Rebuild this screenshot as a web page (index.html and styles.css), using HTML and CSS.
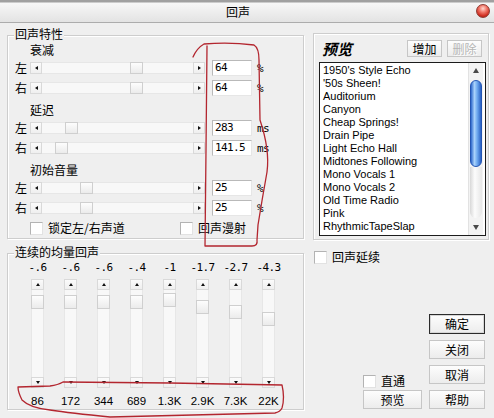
FILE: index.html
```html
<!DOCTYPE html>
<html lang="zh-CN">
<head>
<meta charset="utf-8">
<title>回声</title>
<link rel="stylesheet" href="styles.css">
</head>
<body>
<div class="window">
  <div class="titlebar">
    <div class="title">回声</div>
    <div class="close"></div>
  </div>
  <div class="main">
    <div class="leftcol">
      <div class="group props">
        <span class="legend">回声特性</span>
        <div class="section">
          <div class="sechead">衰减</div>
          <div class="row">
            <span class="rlabel">左</span>
            <div class="hslider"><span class="harrow left"></span><span class="htrack"><span class="hthumb" style="left:88px"></span></span><span class="harrow right"></span></div>
            <span class="field">64</span><span class="unit">%</span>
          </div>
          <div class="row">
            <span class="rlabel">右</span>
            <div class="hslider"><span class="harrow left"></span><span class="htrack"><span class="hthumb" style="left:88px"></span></span><span class="harrow right"></span></div>
            <span class="field">64</span><span class="unit">%</span>
          </div>
        </div>
        <div class="section">
          <div class="sechead">延迟</div>
          <div class="row">
            <span class="rlabel">左</span>
            <div class="hslider"><span class="harrow left"></span><span class="htrack"><span class="hthumb" style="left:23px"></span></span><span class="harrow right"></span></div>
            <span class="field">283</span><span class="unit">ms</span>
          </div>
          <div class="row">
            <span class="rlabel">右</span>
            <div class="hslider"><span class="harrow left"></span><span class="htrack"><span class="hthumb" style="left:13px"></span></span><span class="harrow right"></span></div>
            <span class="field">141.5</span><span class="unit">ms</span>
          </div>
        </div>
        <div class="section">
          <div class="sechead">初始音量</div>
          <div class="row">
            <span class="rlabel">左</span>
            <div class="hslider"><span class="harrow left"></span><span class="htrack"><span class="hthumb" style="left:38px"></span></span><span class="harrow right"></span></div>
            <span class="field">25</span><span class="unit">%</span>
          </div>
          <div class="row">
            <span class="rlabel">右</span>
            <div class="hslider"><span class="harrow left"></span><span class="htrack"><span class="hthumb" style="left:38px"></span></span><span class="harrow right"></span></div>
            <span class="field">25</span><span class="unit">%</span>
          </div>
        </div>
        <div class="checks">
          <label class="check wide"><span class="box"></span><span>锁定左/右声道</span></label>
          <label class="check"><span class="box"></span><span>回声漫射</span></label>
        </div>
      </div>

      <div class="group eq">
        <span class="legend">连续的均量回声</span>
        <div class="eqcols">
          <div class="eqcol"><span class="eqval">-.6</span><div class="vscroll"><span class="varrow up"></span><span class="vtrack"><span class="vthumb" style="top:5px"></span></span><span class="varrow down"></span></div><span class="eqfreq">86</span></div>
          <div class="eqcol"><span class="eqval">-.6</span><div class="vscroll"><span class="varrow up"></span><span class="vtrack"><span class="vthumb" style="top:5px"></span></span><span class="varrow down"></span></div><span class="eqfreq">172</span></div>
          <div class="eqcol"><span class="eqval">-.6</span><div class="vscroll"><span class="varrow up"></span><span class="vtrack"><span class="vthumb" style="top:5px"></span></span><span class="varrow down"></span></div><span class="eqfreq">344</span></div>
          <div class="eqcol"><span class="eqval">-.4</span><div class="vscroll"><span class="varrow up"></span><span class="vtrack"><span class="vthumb" style="top:5px"></span></span><span class="varrow down"></span></div><span class="eqfreq">689</span></div>
          <div class="eqcol"><span class="eqval">-1</span><div class="vscroll"><span class="varrow up"></span><span class="vtrack"><span class="vthumb" style="top:3px"></span></span><span class="varrow down"></span></div><span class="eqfreq">1.3K</span></div>
          <div class="eqcol"><span class="eqval">-1.7</span><div class="vscroll"><span class="varrow up"></span><span class="vtrack"><span class="vthumb" style="top:10px"></span></span><span class="varrow down"></span></div><span class="eqfreq">2.9K</span></div>
          <div class="eqcol"><span class="eqval">-2.7</span><div class="vscroll"><span class="varrow up"></span><span class="vtrack"><span class="vthumb" style="top:15px"></span></span><span class="varrow down"></span></div><span class="eqfreq">7.3K</span></div>
          <div class="eqcol"><span class="eqval">-4.3</span><div class="vscroll"><span class="varrow up"></span><span class="vtrack"><span class="vthumb" style="top:22px"></span></span><span class="varrow down"></span></div><span class="eqfreq">22K</span></div>
        </div>
      </div>
    </div>

    <div class="rightcol">
      <div class="group preset">
        <div class="phead">
          <span class="ptitle">预览</span>
          <span class="btn small">增加</span>
          <span class="btn small disabled">删除</span>
        </div>
        <div class="list">
          <ul class="items">
            <li>1950's Style Echo</li>
            <li>'50s Sheen!</li>
            <li>Auditorium</li>
            <li>Canyon</li>
            <li>Cheap Springs!</li>
            <li>Drain Pipe</li>
            <li>Light Echo Hall</li>
            <li>Midtones Following</li>
            <li>Mono Vocals 1</li>
            <li>Mono Vocals 2</li>
            <li>Old Time Radio</li>
            <li>Pink</li>
            <li>RhythmicTapeSlap</li>
          </ul>
          <div class="lscroll">
            <span class="larrow up"></span>
            <span class="lthumb"></span>
            <span class="lrest"></span>
            <span class="larrow down"></span>
          </div>
        </div>
      </div>
      <label class="check sustain"><span class="box"></span><span>回声延续</span></label>

      <div class="actions">
        <div class="actions-left">
          <label class="check"><span class="box"></span><span>直通</span></label>
          <span class="btn">预览</span>
        </div>
        <div class="actions-right">
          <span class="btn default">确定</span>
          <span class="btn">关闭</span>
          <span class="btn">取消</span>
          <span class="btn">帮助</span>
        </div>
      </div>
    </div>
  </div>
</div>

<svg class="marks" width="494" height="418" viewBox="0 0 494 418" aria-hidden="true">
  <path d="M193,57 Q197,48 204,44 Q230,42 254,45 Q259,48 259,60 L260,120 Q270,150 267,172 Q262,200 258,225 L257,240 Q258,246 252,246 L205,246 L206,150 L207,46"/>
  <path d="M18,387 L50,386 Q58,385 63,382 L170,383 L282,385 Q285,398 282,408 Q280,412 275,413 L110,417 Q70,413 50,410 Q30,408 22,400 Q18,392 18,387"/>
</svg>
</body>
</html>
```

FILE: styles.css
```css
* { box-sizing: border-box; }
html, body { margin: 0; padding: 0; }
body {
  width: 494px;
  height: 418px;
  overflow: hidden;
  position: relative;
  background: #efefef;
  color: #000;
  font-family: "Noto Sans CJK SC", "Liberation Sans", sans-serif;
  font-size: 12px;
}
.window { display: flex; flex-direction: column; height: 418px; }

/* title bar */
.titlebar {
  height: 23px;
  display: flex;
  align-items: center;
  padding-right: 4px;
  background: linear-gradient(#a0a0a0 0, #a0a0a0 2px, #f7f7f7 3px, #e3e3e3 100%);
  border-bottom: 1px solid #acacac;
}
.title { flex: 1; text-align: center; line-height: 16px; padding-top: 1px; }
.close {
  width: 14px;
  height: 14px;
  border-radius: 50%;
  border: 1px solid #8e3a32;
  background: radial-gradient(circle at 50% 30%, #ffd8d0 0, #f27a6c 35%, #cf2f22 70%, #951a12 100%);
}

/* main layout */
.main { flex: 1; display: flex; padding: 10px 0 0 7px; }
.leftcol { width: 297px; padding-top: 2px; display: flex; flex-direction: column; }
.rightcol { width: 176px; margin-left: 9px; display: flex; flex-direction: column; padding-bottom: 9px; }

/* group boxes */
.group {
  position: relative;
  border: 1px solid #cdcdcd;
  box-shadow: inset 1px 1px 0 #fff, 1px 1px 0 #fff;
}
.legend {
  position: absolute;
  left: 6px;
  top: -10px;
  padding: 0 1px;
  background: #efefef;
  line-height: 16px;
}

/* properties group */
.props { padding: 6px 0 0 7px; }
.section + .section { margin-top: 4px; }
.sechead { height: 16px; line-height: 16px; padding-left: 15px; }
.row { height: 20px; display: flex; align-items: center; }
.rlabel { width: 15px; line-height: 14px; }
.hslider { width: 175px; height: 12px; display: flex; margin-right: 7px; }
.harrow {
  width: 12px;
  height: 12px;
  border: 1px solid #d9d9d9;
  background: linear-gradient(#fbfbfb, #efefef);
  display: flex;
  align-items: center;
  justify-content: center;
}
.harrow::before { content: ""; width: 0; height: 0; border-style: solid; }
.harrow.left::before { border-width: 2.5px 3px 2.5px 0; border-color: transparent #111 transparent transparent; }
.harrow.right::before { border-width: 2.5px 0 2.5px 3px; border-color: transparent transparent transparent #111; }
.htrack {
  flex: 1;
  position: relative;
  background: #f8f8f8;
  border-top: 1px solid #e7e7e7;
  border-bottom: 1px solid #e7e7e7;
}
.hthumb {
  position: absolute;
  top: -1px;
  width: 13px;
  height: 12px;
  border: 1px solid #cfcfcf;
  background: linear-gradient(#fdfdfd, #ebebeb);
}
.field {
  width: 40px;
  height: 16px;
  border: 1px solid;
  border-color: #b9b9b9 #e6e6e6 #e6e6e6 #b9b9b9;
  background: #fff;
  padding-left: 2px;
  font-family: "DejaVu Sans Mono", monospace;
  font-size: 11px;
  letter-spacing: -0.62px;
  line-height: 14px;
}
.unit {
  margin-left: 5px;
  font-family: "DejaVu Sans Mono", monospace;
  font-size: 11px;
  letter-spacing: -0.62px;
}

/* checkboxes */
.checks { height: 20px; display: flex; align-items: center; padding-left: 15px; }
.check { display: flex; align-items: center; gap: 5px; line-height: 14px; }
.check.wide { width: 150px; }
.box {
  width: 13px;
  height: 13px;
  background: #fff;
  border: 1px solid;
  border-color: #b3b3b3 #e2e2e2 #e2e2e2 #b3b3b3;
}

/* EQ group */
.eq { margin-top: 14px; padding: 7px 0 1px 13px; }
.eqcols { display: flex; }
.eqcol { width: 33px; display: flex; flex-direction: column; align-items: center; }
.eqval {
  height: 14px;
  line-height: 14px;
  font-family: "DejaVu Sans Mono", monospace;
  font-size: 11px;
  letter-spacing: -0.62px;
}
.vscroll { margin-top: 4px; width: 13px; height: 109px; display: flex; flex-direction: column; }
.varrow {
  height: 11px;
  border: 1px solid #d9d9d9;
  background: linear-gradient(#fbfbfb, #efefef);
  display: flex;
  align-items: center;
  justify-content: center;
}
.varrow::before { content: ""; width: 0; height: 0; border-style: solid; }
.varrow.up::before { border-width: 0 2.5px 3px 2.5px; border-color: transparent transparent #111 transparent; }
.varrow.down::before { border-width: 3px 2.5px 0 2.5px; border-color: #111 transparent transparent transparent; }
.vtrack {
  flex: 1;
  position: relative;
  background: #f8f8f8;
  border-left: 1px solid #e7e7e7;
  border-right: 1px solid #e7e7e7;
}
.vthumb {
  position: absolute;
  left: -1px;
  width: 13px;
  height: 14px;
  border: 1px solid #cfcfcf;
  background: linear-gradient(#fdfdfd, #ebebeb);
}
.eqfreq {
  margin-top: 6px;
  height: 14px;
  line-height: 14px;
  font-family: "Liberation Sans", sans-serif;
  font-size: 11.5px;
}

/* preset group */
.preset { height: 207px; padding: 6px 2px 3px 5px; display: flex; flex-direction: column; }
.phead { height: 17px; display: flex; align-items: center; gap: 5px; margin-right: 4px; }
.ptitle {
  margin-left: 3px;
  margin-right: auto;
  font-size: 15px;
  font-weight: bold;
  font-style: italic;
  line-height: 17px;
}
.list {
  margin-top: 5px;
  flex: 1;
  border: 1px solid #1c1c1c;
  background: #fff;
  display: flex;
}
.items {
  flex: 1;
  list-style: none;
  margin: 0;
  padding: 1px 0 0 3px;
  font-family: "Liberation Sans", sans-serif;
  font-size: 11px;
  line-height: 13px;
  white-space: nowrap;
  overflow: hidden;
}
.lscroll {
  width: 15px;
  margin-right: 2px;
  display: flex;
  flex-direction: column;
  background: #f3f3f3;
  border-left: 1px solid #e2e2e2;
}
.larrow { height: 15px; display: flex; align-items: center; justify-content: center; }
.larrow::before { content: ""; width: 0; height: 0; border-style: solid; }
.larrow.up::before { border-width: 0 3px 5px 3px; border-color: transparent transparent #4a4a4a transparent; }
.larrow.down::before { border-width: 5px 3px 0 3px; border-color: #4a4a4a transparent transparent transparent; }
.lthumb {
  height: 87px;
  margin: 2px 1px 0;
  border-radius: 7px;
  border: 1px solid #2456b4;
  background: linear-gradient(to right, #2f69cc 0%, #a9d2fb 35%, #6ea9ef 62%, #2a61c4 100%);
}
.lrest {
  flex: 1;
  margin: 0 1px 2px;
  border-radius: 0 0 7px 7px;
  background: linear-gradient(to right, #d8d8d8, #fcfcfc 40%, #e6e6e6);
}

.sustain { margin-top: 10px; padding-left: 1px; }

/* buttons */
.btn {
  display: flex;
  align-items: center;
  justify-content: center;
  height: 19px;
  border: 1px solid #c6c6c6;
  background: linear-gradient(#fdfdfd, #ececec);
  line-height: 14px;
  font-size: 12px;
}
.btn.small { width: 35px; height: 17px; }
.btn.disabled { color: #b5b5b5; text-shadow: 1px 1px 0 #fff; }
.btn.default { height: 20px; border-color: #2b2b2b; box-shadow: inset 0 0 0 1px #d6d6d6; }
.actions {
  margin-top: auto;
  margin-left: 50px;
  display: grid;
  grid-template-columns: 59px 56px;
  column-gap: 7px;
}
.actions-left { display: flex; flex-direction: column; justify-content: flex-end; gap: 2px; }
.actions-right { display: flex; flex-direction: column; gap: 6px; }

/* hand-drawn red annotations */
.marks {
  position: absolute;
  left: 0;
  top: 0;
  pointer-events: none;
  fill: none;
  stroke: #b3262f;
  stroke-width: 1.3;
  stroke-linejoin: round;
  stroke-linecap: round;
}
```
